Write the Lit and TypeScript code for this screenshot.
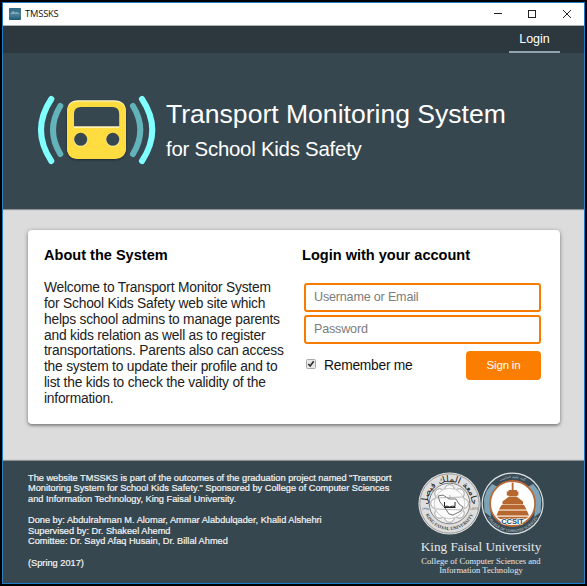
import { LitElement, html, svg, css } from "lit";
import { customElement } from "lit/decorators.js";

@customElement("title-bar")
class TitleBar extends LitElement {
  static styles = css`
    :host { display: flex; align-items: center; height: 23px; background: #fff; border-bottom: 1px solid #aeb3b6; padding-left: 6px; }
    .name { font: 9.3px/22px "Open Sans", sans-serif; color: #111; margin-left: 4px; flex: 1; letter-spacing: -0.15px; }
    .controls { display: block; margin-right: 12px; }
    .app { display: block; }
  `;
  render() {
    return html`
      <svg class="app" width="12" height="12" viewBox="0 0 12 12">
        <defs><linearGradient id="g" x2="0" y2="1"><stop stop-color="#2f6b88" /><stop offset=".6" stop-color="#477f95" /><stop offset="1" stop-color="#1e5873" /></linearGradient></defs>
        <rect width="12" height="12" rx="1" fill="url(#g)" />
        <path d="M1.2 6L3 4L4.5 3L6 4.5L8 4L10.8 6Z" fill="#86abb9" />
      </svg>
      <span class="name">TMSSKS</span>
      <svg class="controls" width="78" height="10" viewBox="0 0 78 10" fill="none" stroke="#222">
        <path d="M0 4.5H8" />
        <rect x="34.5" y="1.5" width="7" height="7" />
        <path d="M69 1L77 9M77 1L69 9" />
      </svg>
    `;
  }
}

@customElement("bus-logo")
class BusLogo extends LitElement {
  static styles = css`
    :host { display: block; width: 120px; height: 74px; }
    svg { display: block; overflow: visible; }
    .bus { filter: drop-shadow(0 1px 1px rgba(0, 0, 0, 0.4)); }
  `;
  render() {
    return html`
      <svg width="120" height="74" viewBox="0 0 120 74">
        <g fill="none" stroke-linecap="round" stroke-width="6">
          <path d="M14.3 4Q-6.3 35 14.3 66M105 4Q125.600 35 105 66" stroke="#80ffff" />
          <path d="M23.300 11Q8.700 35 23.300 59M96 11Q110.600 35 96 59" stroke="#62b4ba" />
        </g>
        <g class="bus" transform="translate(-1 -1)">
          <path fill="#fff6d0" d="M42 6.300H78Q90 6.300 90 18V53Q90 64.500 78 64.500H42Q31 64.500 31 53V18Q31 6.300 42 6.300Z" />
          <path fill="#ffdd40" d="M42 7.500H78Q90 7.500 90 19V53Q90 65 78 65H42Q31 65 31 53V19Q31 7.500 42 7.500Z" />
          <path fill="#37474f" d="M38 32.500V20Q38 13 45 13H76.500Q83.200 13 83.200 20V32.500Z" />
          <path d="M38 33.200H83.200" stroke="#fff8df" stroke-width="1.200" />
          <circle cx="44.700" cy="46" r="6.600" fill="#fff5c8" /><circle cx="76.800" cy="46" r="6.600" fill="#fff5c8" />
          <circle cx="44.700" cy="45.300" r="6.500" fill="#37474f" /><circle cx="76.800" cy="45.300" r="6.500" fill="#37474f" />
        </g>
      </svg>
    `;
  }
}

@customElement("university-seals")
class UniversitySeals extends LitElement {
  static styles = css`
    :host { display: block; width: 126px; height: 64px; }
    svg { display: block; overflow: visible; }
    .arabic { font: 9px "DejaVu Sans", sans-serif; }
    .ring { font: bold 4.600px "Liberation Serif", serif; }
    .tiny { font: 3.400px "DejaVu Sans", sans-serif; }
    .ccsit { font: bold 7.600px "Liberation Sans", sans-serif; }
  `;
  private rosette(n: number, cx: number, cy: number, d: number, r: number) {
    return Array.from({ length: n }, (_, i) => {
      const a = (i * 2 * Math.PI) / n;
      return svg`<circle cx=${cx + d * Math.cos(a)} cy=${cy + d * Math.sin(a)} r=${r} />`;
    });
  }
  render() {
    return html`
      <svg width="126" height="64" viewBox="0 0 126 64">
        <defs>
          <path id="top" d="M9.900 36A22 22 0 1 1 53.100 36" />
          <path id="low" d="M7.100 41A26 26 0 0 0 55.900 41" />
          <path id="ctop" d="M75 15A25.500 25.500 0 0 1 114.200 15" />
          <path id="clow" d="M67.500 40A28.300 28.300 0 0 0 121.700 40" />
        </defs>
        <circle cx="31.500" cy="31.500" r="31" fill="#e6e6e6" />
        <circle cx="31.500" cy="31.500" r="29.700" fill="#dedede" stroke="#858585" stroke-width=".8" />
        <circle cx="31.500" cy="31.500" r="20.300" fill="#eee" stroke="#777" stroke-width=".9" />
        <g fill="#fff" stroke="#888" stroke-width=".8">${this.rosette(8, 31.5, 31.5, 14, 4.8)}</g>
        <circle cx="31.500" cy="31.500" r="15.300" fill="#fafafa" stroke="#aaa" stroke-width=".6" />
        <path d="M20 24L25 23L31 27L38 27L41 32L45 35L43 39L35 43L31 42L27 36L22 30Z" fill="#fff" stroke="#666" stroke-width=".9" />
        <path d="M17 26L46 25M18 37L44 38M32 23V27" stroke="#999" stroke-width=".7" />
        <path d="M26.500 30V34.500Q29 33.500 31.500 35Q34 33.500 37 34.500V30M26 35.500H37.500" fill="none" stroke="#222" stroke-width="1" />
        <text class="arabic" fill="#222" text-anchor="middle"><textPath href="#top" startOffset="50%">جامعة الملك فيصل</textPath></text>
        <text class="ring" fill="#444" text-anchor="middle"><textPath href="#low" startOffset="50%">KING FAISAL UNIVERSITY</textPath></text>
        <text class="tiny" fill="#555" x="3.500" y="38">١٣٩٥</text>
        <text class="tiny" fill="#555" x="51.800" y="38">1975</text>

        <circle cx="94.600" cy="31.500" r="31" fill="#dfe4e6" />
        <circle cx="94.600" cy="31.500" r="29.800" fill="#3b4b55" />
        <path d="M74 12L68.500 19L66 27L66.500 40L73 45L72 31L74 23L80 15ZM115.200 12L120.700 19L123.200 27L122.700 40L116.200 45L117.200 31L115.200 23L109.200 15Z" fill="#7da4b6" />
        <circle cx="94.600" cy="31.500" r="22.500" fill="#fff" stroke="#b96a38" stroke-width="1.800" />
        <g fill="#b6672f">
          <path d="M93.700 10.500H95.500V18H99V24H90.500V18H93.700Z" />
          <rect x="88.800" y="19.500" width="11.600" height="4" />
          <path d="M91 24.500H98.500L105 29.500V32H84.500V29.500Z" />
          <path d="M83.500 33H106L108.500 37.500H81Z" />
          <path d="M80.500 38.800H109L111 43.500H78.500Z" />
          <path d="M79 45H110.500L107 47H82Z" />
        </g>
        <path d="M84.500 32.500H105M81 38.200H108.500M79 44.200H110.500" stroke="#dca071" stroke-width=".8" />
        <text class="ccsit" x="83.200" y="51.600" textLength="22.500" lengthAdjust="spacingAndGlyphs" fill="#124b78" stroke="#fff" stroke-width="1.200" paint-order="stroke">CCSIT</text>
        <text class="tiny" fill="#b9c7cf" text-anchor="middle"><textPath href="#ctop" startOffset="50%">كلية علوم الحاسب</textPath></text>
        <text class="tiny" fill="#c8d2d8" text-anchor="middle"><textPath href="#clow" startOffset="50%">COLLEGE OF COMPUTER SCIENCES</textPath></text>
      </svg>
    `;
  }
}

@customElement("app-root")
class AppRoot extends LitElement {
  static styles = css`
    :host { display: block; width: 587px; height: 586px; box-sizing: border-box; background: #000; padding: 2px; font-family: "Liberation Sans", Arial, sans-serif; overflow: hidden; }
    * { box-sizing: border-box; }
    .window { width: 583px; height: 582px; border: 1px solid #1d7cc9; display: flex; flex-direction: column; background: #dcdcdc; }
    nav { height: 27px; background: #2c383d; display: flex; justify-content: flex-end; padding-right: 24px; flex: none; }
    .tab { width: 51px; height: 27px; border-bottom: 2px solid #90a4ae; color: #fff; font-size: 12.500px; line-height: 26px; text-align: center; }
    .hero { height: 156px; background: #37474f; display: flex; color: #fff; padding: 42px 0 0 34px; flex: none; box-shadow: 0 1px 1px #8c9294; position: relative; }
    .titles { margin-left: 9px; white-space: nowrap; }
    h1 { font-size: 26.550px; font-weight: 400; line-height: 30px; margin: 4px 0 0; }
    h2 { font-size: 20.400px; letter-spacing: -0.230px; font-weight: 400; line-height: 24px; margin: 8px 0 0; }
    main { height: 252px; padding: 21px 24px 0 25px; flex: none; }
    .card { height: 194px; background: #fff; border-radius: 4px; box-shadow: 0 1px 4px rgba(0, 0, 0, 0.4), 0 2px 2px rgba(0, 0, 0, 0.15); display: flex; padding: 16px 19px 0 16px; }
    .about { width: 258px; white-space: nowrap; }
    .login { flex: 1; }
    h3 { font-size: 14.550px; line-height: 18px; margin: 0; color: #000; }
    .copy { font-size: 13.800px; letter-spacing: -0.220px; line-height: 15.850px; margin: 16px 0 0; color: #212121; }
    .form { display: flex; flex-direction: column; padding: 19px 0 0 2px; gap: 3px; }
    .field { width: 237px; height: 29px; border: 2px solid #f57c00; border-radius: 3px; padding: 0 8px 1px; font: 12.600px "Liberation Sans", sans-serif; letter-spacing: -0.200px; outline: none; background: #fff; }
    .field::placeholder { color: #7c7c7c; opacity: 1; }
    .actions { display: flex; align-items: center; margin-top: 4px; width: 237px; }
    .check { display: block; margin: 0 8px 3px 2px; }
    .remember { flex: 1; font-size: 13.800px; letter-spacing: -0.250px; color: #111; line-height: 29px; }
    .signin { width: 75px; height: 29px; border: 0; border-radius: 4px; background: #fb7e00; color: #fff; font: 11.500px "Liberation Sans", sans-serif; letter-spacing: -0.200px; padding: 0 0 1px; }
    footer { flex: 1; background: #37474f; color: #f2f4f5; display: flex; justify-content: space-between; padding: 11px 40px 0 25px; box-shadow: 0 -1px 1px #8c9294; }
    .credits { padding-top: 0.500px; font-size: 9.220px; line-height: 10.650px; white-space: nowrap; -webkit-text-stroke: 0.200px #f2f4f5; }
    .credits p { margin: 0 0 10.650px; }
    .school { width: 126px; font-family: "Liberation Serif", serif; color: #e4e8ea; text-align: center; white-space: nowrap; }
    .uni { font-size: 13.250px; line-height: 15px; margin-top: 3px; }
    .college { font-size: 8.600px; line-height: 9px; margin-top: 3px; }
  `;
  render() {
    return html`
      <div class="window">
        <title-bar></title-bar>
        <nav><div class="tab">Login</div></nav>
        <header class="hero">
          <bus-logo></bus-logo>
          <div class="titles"><h1>Transport Monitoring System</h1><h2>for School Kids Safety</h2></div>
        </header>
        <main>
          <div class="card">
            <section class="about">
              <h3>About the System</h3>
              <p class="copy">
                Welcome to Transport Monitor System<br />for School Kids Safety web site which<br />helps school admins to manage parents<br />and kids relation as well as to register<br />transportations. Parents also can access<br />the system to update their profile and to<br />list the kids to check the validity of the<br />information.
              </p>
            </section>
            <section class="login">
              <h3>Login with your account</h3>
              <div class="form">
                <input class="field" placeholder="Username or Email" />
                <input class="field" type="password" placeholder="Password" />
                <div class="actions">
                  <svg class="check" width="10" height="10" viewBox="0 0 10 10"><rect x=".5" y=".5" width="9" height="9" rx="1" fill="#e8e8e8" stroke="#aaa" /><path d="M2.300 5L4.200 7L7.700 2.300" fill="none" stroke="#333" stroke-width="1.700" /></svg>
                  <span class="remember">Remember me</span>
                  <button class="signin">Sign in</button>
                </div>
              </div>
            </section>
          </div>
        </main>
        <footer>
          <div class="credits">
            <p>The website TMSSKS is part of the outcomes of the graduation project named "Transport<br />Monitoring System for School Kids Safety." Sponsored by College of Computer Sciences<br />and Information Technology, King Faisal University.</p>
            <p>Done by: Abdulrahman M. Alomar, Ammar Alabdulqader, Khalid Alshehri<br />Supervised by: Dr. Shakeel Ahemd<br />Comittee: Dr. Sayd Afaq Husain, Dr. Billal Ahmed</p>
            <p>(Spring 2017)</p>
          </div>
          <div class="school">
            <university-seals></university-seals>
            <div class="uni">King Faisal University</div>
            <div class="college">College of Computer Sciences and<br />Information Technology</div>
          </div>
        </footer>
      </div>
    `;
  }
}
